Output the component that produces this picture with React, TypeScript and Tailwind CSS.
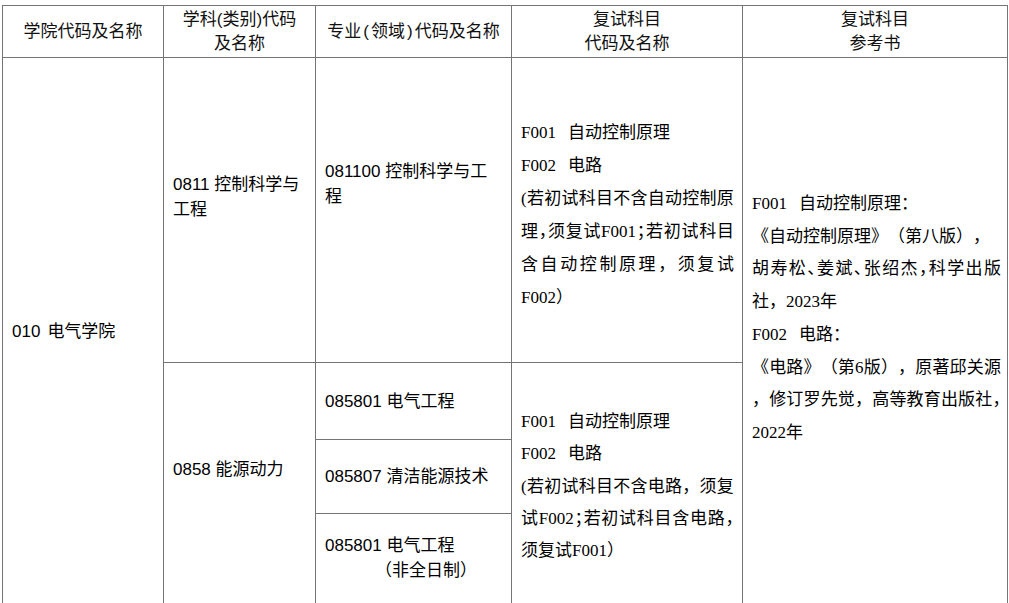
const sans = "font-['Liberation_Sans','Noto_Sans_CJK_SC',sans-serif]";
const serif = "font-['Liberation_Serif','Noto_Sans_CJK_SC',serif]";

// one justified line; "~" before a punctuation mark squeezes it to half width
function J({ t }: { t: string }) {
  const toks: { s: string; tight: boolean }[] = [];
  let i = 0;
  while (i < t.length) {
    if (t[i] === "~") {
      toks.push({ s: t[i + 1], tight: true });
      i += 2;
      continue;
    }
    const m = /^[A-Za-z0-9]+/.exec(t.slice(i));
    if (m) {
      toks.push({ s: m[0], tight: false });
      i += m[0].length;
      continue;
    }
    toks.push({ s: t[i], tight: false });
    i++;
  }
  return (
    <div className="flex justify-between">
      {toks.map((k, j) => (
        <span key={j} className={k.tight ? "shrink-0 tracking-[-8.5px]" : "shrink-0"}>
          {k.s}
        </span>
      ))}
    </div>
  );
}

function Code({ c, name }: { c: string; name: string }) {
  return (
    <div>
      {c}
      <span className="ml-[12px]">{name}</span>
    </div>
  );
}

export default function App() {
  return (
    <div className="min-h-screen bg-white pt-[5px] pl-[2px] text-[17px] text-black [text-spacing-trim:space-all]">
      <div className="grid w-[1006px] grid-cols-[160px_151px_195px_230px_264px] grid-rows-[51px_304px_76px_73px_91px] gap-px bg-[#747474] p-px">
        {/* header */}
        <div className={`${sans} flex items-center justify-center bg-white leading-[24px] text-[#111]`}>学院代码及名称</div>
        <div className={`${sans} flex flex-col items-center justify-center bg-white leading-[24px] text-[#111]`}>
          <div>学科(类别)代码</div>
          <div>及名称</div>
        </div>
        <div className={`${sans} flex items-center justify-center bg-white leading-[24px] text-[#111]`}>
          <span>
            专业<span className="mx-[2px]">(</span>领域<span className="mx-[2px]">)</span>代码及名称
          </span>
        </div>
        <div className={`${sans} flex flex-col items-center justify-center bg-white leading-[24px] text-[#111]`}>
          <div>复试科目</div>
          <div>代码及名称</div>
        </div>
        <div className={`${sans} flex flex-col items-center justify-center bg-white leading-[24px] text-[#111]`}>
          <div>复试科目</div>
          <div>参考书</div>
        </div>

        {/* college */}
        <div className={`${sans} row-span-4 row-start-2 flex items-center bg-white pl-[9px] leading-[25px]`}>
          <span>
            010<span className="ml-[7px]">电气学院</span>
          </span>
        </div>

        {/* 0811 */}
        <div className={`${sans} col-start-2 row-start-2 bg-white pl-[9px] pt-[114px] leading-[25px]`}>
          <div>0811 控制科学与</div>
          <div>工程</div>
        </div>
        <div className={`${sans} col-start-3 row-start-2 bg-white pl-[9px] pt-[101px] leading-[25px]`}>
          <div>081100 控制科学与工</div>
          <div>程</div>
        </div>
        <div className={`${serif} col-start-4 row-start-2 bg-white pl-[9px] pr-[8px] pt-[58px] leading-[33px]`}>
          <Code c="F001" name="自动控制原理" />
          <Code c="F002" name="电路" />
          <J t="(若初试科目不含自动控制原" />
          <J t="理~，须复试F001~；若初试科目" />
          <J t="含自动控制原理，须复试" />
          <div>F002）</div>
        </div>

        {/* reference books */}
        <div className={`${serif} col-start-5 row-span-4 row-start-2 bg-white pl-[9px] pr-[6px] pt-[130px] leading-[32.7px]`}>
          <Code c="F001" name="自动控制原理：" />
          <div>《自动控制原理》（第八版），</div>
          <J t="胡寿松~、姜斌~、张绍杰~，科学出版" />
          <div>社，2023年</div>
          <Code c="F002" name="电路：" />
          <J t="《电路》（第6版），原著邱关源" />
          <J t="，修订罗先觉，高等教育出版社~，" />
          <div>2022年</div>
        </div>

        {/* 0858 */}
        <div className={`${sans} col-start-2 row-span-3 row-start-3 bg-white pl-[9px] pt-[94px] leading-[25px]`}>
          0858 能源动力
        </div>
        <div className={`${sans} col-start-3 row-start-3 flex items-center bg-white pl-[9px] leading-[25px]`}>
          085801 电气工程
        </div>
        <div className={`${sans} col-start-3 row-start-4 flex items-center bg-white pl-[9px] leading-[25px]`}>
          085807 清洁能源技术
        </div>
        <div className={`${sans} col-start-3 row-start-5 bg-white pl-[9px] pt-[19px] leading-[25px]`}>
          <div>085801 电气工程</div>
          <div className="ml-[50px]">（非全日制）</div>
        </div>
        <div className={`${serif} col-start-4 row-span-3 row-start-3 bg-white pl-[9px] pr-[8px] pt-[43px] leading-[32.3px]`}>
          <Code c="F001" name="自动控制原理" />
          <Code c="F002" name="电路" />
          <J t="(若初试科目不含电路，须复" />
          <J t="试F002~；若初试科目含电路~，" />
          <div>须复试F001）</div>
        </div>
      </div>
    </div>
  );
}
